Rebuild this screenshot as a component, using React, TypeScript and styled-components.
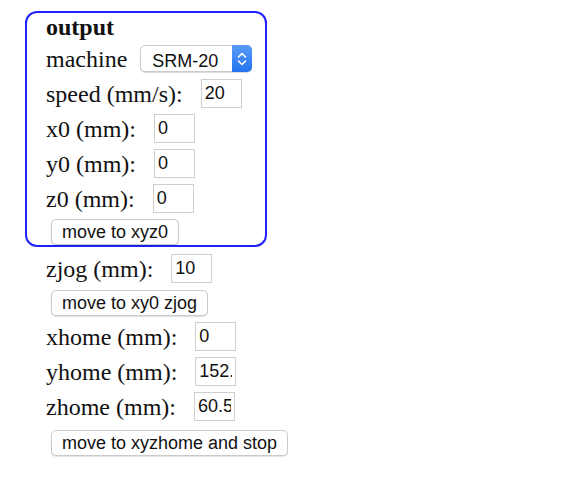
import React from 'react';
import styled, { createGlobalStyle } from 'styled-components';

const GlobalStyle = createGlobalStyle`
  body {
    margin: 0;
    background: #ffffff;
    color: #111111;
    font-family: 'Liberation Serif', 'Times New Roman', serif;
    font-size: 24px;
  }
`;

const StyledPage = styled.div`
  padding: 11px 0 0 25px;
`;

const StyledPanel = styled.div`
  box-sizing: border-box;
  width: 242px;
  border: 2px solid #1e22ff;
  border-radius: 12px;
  padding: 0 0 0 19px;
`;

const StyledTitle = styled.div`
  height: 28px;
  line-height: 28px;
  font-weight: bold;
`;

const StyledRow = styled.div<{ $gap?: number; $height?: number }>`
  display: flex;
  align-items: center;
  gap: ${({ $gap }) => $gap ?? 18}px;
  height: ${({ $height }) => $height ?? 35}px;
  white-space: nowrap;
`;

const StyledButtonRow = styled(StyledRow)<{ $bottom?: boolean }>`
  align-items: ${({ $bottom }) => ($bottom ? 'flex-end' : 'center')};
  padding-left: 5px;
`;

const StyledLabel = styled.span`
  line-height: 1;
`;

const StyledInput = styled.input`
  box-sizing: border-box;
  width: 41px;
  height: 29px;
  margin: 0;
  padding: 0 3px;
  border: 1px solid #cfcfcf;
  border-radius: 0;
  outline: none;
  font-family: 'Liberation Sans', Arial, sans-serif;
  font-size: 18px;
  color: #111111;
  background: #ffffff;
`;

const StyledButton = styled.button`
  box-sizing: border-box;
  height: 26px;
  margin: 0;
  padding: 0 10px;
  border: 1px solid #cacaca;
  border-radius: 5px;
  background: #ffffff;
  box-shadow: 0 1px 1px rgba(0, 0, 0, 0.12);
  font-family: 'Liberation Sans', Arial, sans-serif;
  font-size: 18px;
  color: #111111;
  line-height: 24px;
`;

const StyledSelectWrap = styled.div`
  position: relative;
  box-sizing: border-box;
  width: 112px;
  height: 27px;
  border: 1px solid #cbcbcb;
  border-radius: 5px;
  background: #ffffff;
  box-shadow: 0 1px 1px rgba(0, 0, 0, 0.15);
`;

const StyledSelect = styled.select`
  appearance: none;
  width: 100%;
  height: 100%;
  margin: 0;
  padding: 0 0 0 11px;
  border: none;
  background: transparent;
  outline: none;
  font-family: 'Liberation Sans', Arial, sans-serif;
  font-size: 18px;
  color: #111111;
`;

const StyledSelectArrow = styled.div`
  position: absolute;
  top: -1px;
  right: -1px;
  bottom: -1px;
  width: 20px;
  display: flex;
  align-items: center;
  justify-content: center;
  border-radius: 0 5px 5px 0;
  background: linear-gradient(#5a9cf8, #2274f0);
  pointer-events: none;
`;

const StyledOutside = styled.div`
  padding: 4px 0 0 21px;
`;

const machines = ['SRM-20', 'MDX-15', 'MDX-20', 'MDX-40'];

export default function App() {
  return (
    <StyledPage>
      <GlobalStyle />
      <StyledPanel>
        <StyledTitle>output</StyledTitle>
        <StyledRow $gap={13}>
          <StyledLabel>machine</StyledLabel>
          <StyledSelectWrap>
            <StyledSelect defaultValue="SRM-20">
              {machines.map(m => (
                <option key={m} value={m}>
                  {m}
                </option>
              ))}
            </StyledSelect>
            <StyledSelectArrow>
              <svg width="10" height="16" viewBox="0 0 10 16" fill="none">
                <path
                  d="M1.5 6 L5 2.5 L8.5 6 M1.5 10 L5 13.5 L8.5 10"
                  stroke="#ffffff"
                  strokeWidth="1.6"
                  strokeLinecap="round"
                  strokeLinejoin="round"
                />
              </svg>
            </StyledSelectArrow>
          </StyledSelectWrap>
        </StyledRow>
        <StyledRow>
          <StyledLabel>speed (mm/s):</StyledLabel>
          <StyledInput defaultValue="20" />
        </StyledRow>
        <StyledRow>
          <StyledLabel>x0 (mm):</StyledLabel>
          <StyledInput defaultValue="0" />
        </StyledRow>
        <StyledRow>
          <StyledLabel>y0 (mm):</StyledLabel>
          <StyledInput defaultValue="0" />
        </StyledRow>
        <StyledRow>
          <StyledLabel>z0 (mm):</StyledLabel>
          <StyledInput defaultValue="0" />
        </StyledRow>
        <StyledButtonRow $height={29} $bottom>
          <StyledButton>move to xyz0</StyledButton>
        </StyledButtonRow>
      </StyledPanel>
      <StyledOutside>
        <StyledRow>
          <StyledLabel>zjog (mm):</StyledLabel>
          <StyledInput defaultValue="10" />
        </StyledRow>
        <StyledButtonRow $height={33}>
          <StyledButton>move to xy0 zjog</StyledButton>
        </StyledButtonRow>
        <StyledRow>
          <StyledLabel>xhome (mm):</StyledLabel>
          <StyledInput defaultValue="0" />
        </StyledRow>
        <StyledRow>
          <StyledLabel>yhome (mm):</StyledLabel>
          <StyledInput defaultValue="152.4" />
        </StyledRow>
        <StyledRow>
          <StyledLabel>zhome (mm):</StyledLabel>
          <StyledInput defaultValue="60.5" />
        </StyledRow>
        <StyledButtonRow $height={37}>
          <StyledButton>move to xyzhome and stop</StyledButton>
        </StyledButtonRow>
      </StyledOutside>
    </StyledPage>
  );
}
